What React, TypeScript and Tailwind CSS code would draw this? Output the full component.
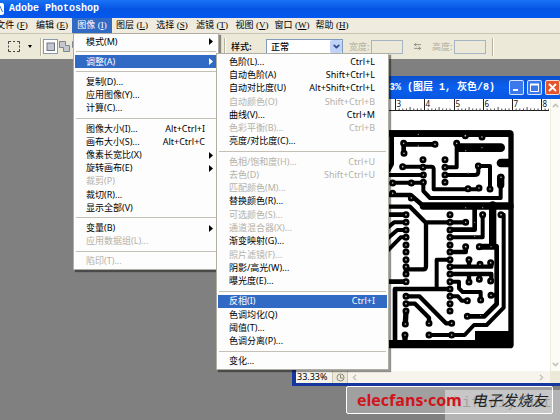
import { ArrowLeftRight, ChevronDown, ChevronLeft, ChevronRight, ChevronUp } from 'lucide-react';
import type { ReactNode } from 'react';

type Item = { label: string; keys?: string; disabled?: boolean; arrow?: boolean; active?: boolean; submenu?: ReactNode };

const menus = [
  ['文件', 'F'],
  ['编辑', 'E'],
  ['图像', 'I'],
  ['图层', 'L'],
  ['选择', 'S'],
  ['滤镜', 'T'],
  ['视图', 'V'],
  ['窗口', 'W'],
  ['帮助', 'H']
];

const adjustGroups: Item[][] = [
  [
    { label: '色阶(L)...', keys: 'Ctrl+L' },
    { label: '自动色阶(A)', keys: 'Shift+Ctrl+L' },
    { label: '自动对比度(U)', keys: 'Alt+Shift+Ctrl+L' },
    { label: '自动颜色(O)', keys: 'Shift+Ctrl+B', disabled: true },
    { label: '曲线(V)...', keys: 'Ctrl+M' },
    { label: '色彩平衡(B)...', keys: 'Ctrl+B', disabled: true },
    { label: '亮度/对比度(C)...' }
  ],
  [
    { label: '色相/饱和度(H)...', keys: 'Ctrl+U', disabled: true },
    { label: '去色(D)', keys: 'Shift+Ctrl+U', disabled: true },
    { label: '匹配颜色(M)...', disabled: true },
    { label: '替换颜色(R)...' },
    { label: '可选颜色(S)...', disabled: true },
    { label: '通道混合器(X)...', disabled: true },
    { label: '渐变映射(G)...' },
    { label: '照片滤镜(F)...', disabled: true },
    { label: '阴影/高光(W)...' },
    { label: '曝光度(E)...' }
  ],
  [
    { label: '反相(I)', keys: 'Ctrl+I', active: true },
    { label: '色调均化(Q)' },
    { label: '阈值(T)...' },
    { label: '色调分离(P)...' }
  ],
  [{ label: '变化...' }]
];

const imageGroups: Item[][] = [
  [{ label: '模式(M)', arrow: true }],
  [
    {
      label: '调整(A)',
      arrow: true,
      active: true,
      submenu: <Menu groups={adjustGroups} className="left-[141px] -top-[2px] h-[317px] w-[173px]" />
    }
  ],
  [{ label: '复制(D)...' }, { label: '应用图像(Y)...' }, { label: '计算(C)...' }],
  [
    { label: '图像大小(I)...', keys: 'Alt+Ctrl+I' },
    { label: '画布大小(S)...', keys: 'Alt+Ctrl+C' },
    { label: '像素长宽比(X)', arrow: true },
    { label: '旋转画布(E)', arrow: true },
    { label: '裁剪(P)', disabled: true },
    { label: '裁切(R)...' },
    { label: '显示全部(V)' }
  ],
  [
    { label: '变量(B)', arrow: true },
    { label: '应用数据组(L)...', disabled: true }
  ],
  [{ label: '陷印(T)...', disabled: true }]
];

function MenuRow({ item }: { item: Item }) {
  const tone = item.active ? 'bg-[#316ac5] text-white' : item.disabled ? 'text-[#b4b1a8]' : 'text-black';
  return (
    <li className="relative flex flex-1">
      <button
        type="button"
        disabled={item.disabled}
        className={`flex flex-1 items-center justify-between pl-[11px] pr-3 text-[9px] leading-3 whitespace-nowrap ${tone}`}
      >
        <span>{item.label}</span>
        {item.keys && <span>{item.keys}</span>}
        {item.arrow && (
          <svg className="-mr-2 h-[7px] w-1" viewBox="0 0 4 7" fill="currentColor">
            <path d="M0 0L4 3.5L0 7Z" />
          </svg>
        )}
      </button>
      {item.submenu}
    </li>
  );
}

function Menu({ groups, className }: { groups: Item[][]; className: string }) {
  return (
    <ul
      className={`absolute z-10 flex flex-col border border-[#b0ada2] bg-[#fdfdfd] p-px font-['Noto_Sans','Noto_Sans_CJK_SC',sans-serif] shadow-[2px_2px_1px_#0000006b] ${className}`}
    >
      {groups.flatMap((group, index) => [
        index > 0 && (
          <li key={`line-${index}`} className="flex h-[7px] flex-none items-center px-px">
            <hr className="flex-1 border-[#c4c1b4]" />
          </li>
        ),
        ...group.map((item) => <MenuRow key={item.label} item={item} />)
      ])}
    </ul>
  );
}

function MenuBar() {
  return (
    <nav className="relative z-20 -ml-2 flex h-[15px] bg-[#efecdf] font-['Liberation_Serif','Noto_Sans_CJK_SC',serif] text-[9px] leading-[15px]">
      {menus.map(([name, key]) => (
        <div key={key} className="relative w-10">
          <button
            type="button"
            className={`h-full w-full text-center whitespace-nowrap ${key === 'I' ? 'bg-[#316ac5] text-white' : 'text-black'}`}
          >
            {name} (<u>{key}</u>)
          </button>
          {key === 'I' && <Menu groups={imageGroups} className="top-full left-px h-[237px] w-[146px]" />}
        </div>
      ))}
    </nav>
  );
}

function Divider() {
  return <div className="h-[18px] w-[2px] border-l border-[#b5b2a2] bg-white" />;
}

function SizeField({ id, label }: { id: string; label: string }) {
  return (
    <div className="flex items-center">
      <label htmlFor={id} className="w-[22px] whitespace-nowrap text-[#b4b1a3]">
        {label}
      </label>
      <input id={id} disabled className="h-[14px] w-8 border border-[#a5b5c6] bg-[#ece9d8]" />
    </div>
  );
}

function OptionsBar() {
  return (
    <div className="flex h-[26px] items-center border-t border-[#c9c5b5] bg-[#ece9d8] font-['Noto_Sans_CJK_SC',sans-serif] text-[9px] leading-3">
      <div className="flex w-[224px] flex-none items-center pl-2">
        <button type="button" aria-label="矩形选框" className="flex items-center gap-2">
          <svg className="h-[11px] w-3" viewBox="0 0 12 11" fill="none" stroke="#444">
            <path d="M.5 3V.5H3M5 .5H7M9 .5H11.500V3M11.500 4.500V6.500M11.500 8V10.500H9M7 10.500H5M3 10.500H.5V8M.5 6.500V4.500" />
          </svg>
          <svg className="h-[3px] w-1" viewBox="0 0 4 3">
            <path d="M0 0H4L2 3Z" />
          </svg>
        </button>
        <div className="mr-px ml-2">
          <Divider />
        </div>
        <button type="button" aria-label="新选区" className="border border-[#8b99ad] bg-white p-[2px]">
          <svg className="size-[9px]" viewBox="0 0 9 9">
            <rect x="1" y="1" width="7.5" height="7.5" fill="#c4c7cf" stroke="#6e7483" />
          </svg>
        </button>
        <button type="button" aria-label="添加到选区" className="ml-px">
          <svg className="size-[11px]" viewBox="0 0 11 11" fill="#c4c7cf" stroke="#80858f">
            <path d="M.5.5H6.500V4.500H10.500V10.500H4.500V6.500H.5Z" />
          </svg>
        </button>
        <button type="button" aria-label="从选区减去" className="ml-[2px]">
          <svg className="size-[11px]" viewBox="0 0 11 11" fill="#c4c7cf" stroke="#80858f">
            <path d="M.5.5H6.500V4.500H4.500V6.500H.5Z" />
          </svg>
        </button>
      </div>
      <Divider />
      <label htmlFor="style" className="mr-[10px] ml-[5px] w-[25px] font-medium whitespace-nowrap">
        样式:
      </label>
      <div className="relative flex">
        <select
          id="style"
          className="h-[15px] w-[77px] appearance-none border border-[#7f9db9] bg-white pl-1 text-[9px] leading-3 font-medium"
        >
          <option>正常</option>
        </select>
        <span className="pointer-events-none absolute top-px right-px flex h-[13px] w-3 items-center justify-center rounded-xs bg-[#c0d2f8] text-[#34508c]">
          <ChevronDown size={9} strokeWidth={5} />
        </span>
      </div>
      <div className="ml-[6px] flex items-center gap-[10px]">
        <SizeField id="width" label="宽度:" />
        <ArrowLeftRight size={9} className="text-[#77756b]" />
        <SizeField id="height" label="高度:" />
      </div>
      <div className="ml-[6px]">
        <Divider />
      </div>
    </div>
  );
}

const traces: [number, string][] = [
  [20, 'M0 191H388'],
  [14, 'M35 195V282L25 300'],
  [14, 'M71 217V250M71 223H165'],
  [12, 'M230 220V292H195'],
  [26, 'M238 233H362'],
  [12, 'M68 290H154Q161 290 161 298V358H297'],
  [12, 'M0 315H130M195 315H284Q295 315 295 305V288H330V357'],
  [26, 'M363 279H386'],
  [22, 'M362 322V345'],
  [12, 'M38 338H130V363L150 384H362V345'],
  [14, 'M20 375H92L130 408'],
  [22, 'M130 408H390'],
  [13, 'M20 410H90L136 457H260M138 457V588Q138 598 130 598H78'],
  [14, 'M20 434H78'],
  [12, 'M20 475L42 457H78M20 508L52 480H78M20 545L62 502H78'],
  [14, 'M284 408V479H210'],
  [12, 'M308 434V502H210'],
  [22, 'M338 405V525'],
  [18, 'M298 530H347'],
  [14, 'M350 530V702L313 739H262'],
  [12, 'M363 434H371V713L320 765H282L254 795H147'],
  [14, 'M210 546H257V532'],
  [12, 'M210 569H170V657'],
  [13, 'M210 590H334V578M267 570V590M300 583V590'],
  [13, 'M210 612H334V632M267 612V635M299 612V627'],
  [14, 'M20 635H78M78 590V612'],
  [14, 'M45 815V657H210'],
  [12, 'M210 635H237V655L248 666H302V690'],
  [12, 'M210 679H234L245 692H262M333 676H350'],
  [13, 'M78 679H118L198 760H215'],
  [13, 'M78 701H105L147 743V762'],
  [16, 'M78 723L76 762M75 795V820']
];

const pads = [
  [71, 220], [165, 223], [72, 250], [129, 269], [195, 269], [195, 292], [68, 290], [129, 292], [195, 315],
  [130, 315], [295, 288], [363, 322], [195, 337], [38, 339], [94, 339], [130, 337], [264, 356], [297, 354],
  [330, 357], [38, 370], [94, 384], [257, 457], [308, 434], [363, 434], [298, 530], [257, 530], [267, 569],
  [300, 583], [332, 578], [267, 636], [298, 628], [332, 633], [302, 690], [262, 692], [333, 676], [262, 739],
  [215, 760], [147, 760], [76, 762], [75, 795], [147, 795], [215, 795], [230, 220], [306, 201], [256, 197]
];

const drills = [
  [115, 228], [115, 193], [257, 242], [306, 233], [265, 309], [257, 413], [308, 413], [284, 457], [284, 499],
  [333, 530], [302, 736]
];

const chipRows = [434, 457, 480, 502, 525, 546, 569, 590, 612, 635, 657, 679, 701, 723];

function Board() {
  const holes = [...pads, ...chipRows.flatMap((y) => (y === 657 ? [[210, y]] : [[78, y], [210, y]]))];
  return (
    <svg className="h-[230px] w-[135px]" viewBox="0 150 405 690" fill="none" stroke="#000">
      <path d="M0 181H390Q401 181 401 192V824Q401 835 390 835H0V810H285V783H385V200H0Z" fill="#000" stroke="none" />
      {traces.map(([width, d]) => (
        <path key={d} d={d} strokeWidth={width} strokeLinecap="round" strokeLinejoin="round" />
      ))}
      {holes.map(([x, y]) => (
        <circle key={`${x}-${y}`} cx={x} cy={y} r="6.500" strokeWidth="8" fill="#bbb" />
      ))}
      {drills.map(([x, y]) => (
        <circle key={`${x}-${y}`} cx={x} cy={y} r="2" fill="#999" stroke="none" />
      ))}
    </svg>
  );
}

function Ruler() {
  const inches = [3, 4, 5, 6, 7, 8];
  return (
    <svg className="h-3 w-[253px]" viewBox="0 0 253 12" stroke="#222">
      <path d="M0 11.500H253" />
      {inches.map((n) => {
        const x = Math.round(11.5 + n * 29.2) + 0.5;
        return (
          <g key={n}>
            <path d={`M${x} 0V12`} strokeWidth="1" />
            {[1, 2, 3, 4, 5, 6, 7].map((t) => (
              <path key={t} d={`M${x + t * 3.65} ${t === 4 ? 8 : 9.5}V12`} strokeWidth="0.8" />
            ))}
            <text x={x + 1} y="8" fontSize="8" fill="#111" stroke="none">
              {n}
            </text>
          </g>
        );
      })}
    </svg>
  );
}

function DocumentWindow() {
  const control = 'flex size-[15px] items-center justify-center rounded-xs border border-white/80';
  return (
    <section className="absolute top-[76px] right-0 left-[292px] flex h-[310px] flex-col border-b-[3px] border-l-4 border-[#15369c] bg-white">
      <header className="-ml-1 flex h-[23px] flex-none items-center gap-[3px] bg-linear-to-b from-[#0b50cc] via-[#0a5ff0] to-[#0756e0] pl-[79px] text-white">
        <h2 className="flex-1 font-['Liberation_Mono','Noto_Sans_CJK_SC',monospace] text-[10px] leading-3 font-bold whitespace-nowrap">
          33.3% (图层 1, 灰色/8)
        </h2>
        <button type="button" aria-label="最小化" className={`${control} bg-[#3b78ea]`}>
          <svg className="size-[9px]" viewBox="0 0 9 9" fill="#fff">
            <rect x="1" y="6" width="5" height="2" />
          </svg>
        </button>
        <button type="button" aria-label="最大化" className={`${control} bg-[#3b78ea]`}>
          <svg className="size-[9px]" viewBox="0 0 9 9" fill="none" stroke="#fff">
            <path d="M.5 1.500H8.500V8.500H.5Z" />
            <path d="M0 1.500H9" strokeWidth="2" />
          </svg>
        </button>
        <button type="button" aria-label="关闭" className={`${control} bg-[#e0562f]`}>
          <svg className="size-[9px]" viewBox="0 0 9 9" stroke="#fff" strokeWidth="1.8">
            <path d="M1 1L8 8M8 1L1 8" />
          </svg>
        </button>
      </header>
      <div className="flex min-h-0 flex-1">
        <div className="flex-1 font-['Noto_Sans',sans-serif]">
          <Ruler />
          <div className="pt-[9px] pl-[84px]">
            <Board />
          </div>
        </div>
        <div className="flex w-[10px] flex-none flex-col items-center justify-between border-l border-[#eeeddf] bg-[#fcfbf6] py-[2px] text-[#c5c3b5]">
          <ChevronUp size={9} strokeWidth={4} />
          <ChevronDown size={9} strokeWidth={4} />
        </div>
      </div>
      <footer className="flex h-3 flex-none items-center bg-[#f6f4ec] font-['Noto_Sans',sans-serif] text-[9px] leading-3 text-black">
        <span className="w-9 pl-px">33.33%</span>
        <span className="flex h-full w-4 items-center justify-center border-x border-[#c9c6b8] bg-[#ece9d8]">
          <svg className="size-[9px]" viewBox="0 0 9 9" fill="none" stroke="#8a887e">
            <circle cx="4.500" cy="4.500" r="3.500" />
            <path d="M4.500 2V5H7" />
          </svg>
        </span>
        <span className="flex flex-1 items-center justify-between pr-1 pl-[2px] text-[#c5c3b5]">
          <ChevronLeft size={9} strokeWidth={4} />
          <ChevronRight size={9} strokeWidth={4} />
        </span>
        <span className="h-full w-[10px] bg-[#ece9d8]" />
      </footer>
    </section>
  );
}

function Watermark() {
  return (
    <>
      <div className="absolute right-0 bottom-0 flex h-[30px] w-[115px] items-start bg-[#b4b4b4] pt-[6px] pl-2 font-['Liberation_Mono',monospace] text-[15px] leading-4 text-[#858585]">
        hifidiy.net
      </div>
      <a
        href="#elecfans"
        className="absolute right-[7px] bottom-[6px] flex h-7 w-[207px] items-center gap-[10px] rounded-xs border border-white bg-white/25 pl-[10px] whitespace-nowrap"
      >
        <span className="font-['Open_Sans',sans-serif] text-[16px] leading-6 font-bold text-[#d0141c]">elecfans·com</span>
        <span className="font-['Noto_Sans_CJK_SC',sans-serif] text-[15px] leading-6 text-[#222] italic">电子发烧友</span>
      </a>
    </>
  );
}

export default function App() {
  return (
    <main className="relative flex min-h-screen flex-col overflow-hidden bg-[#808080]">
      <header className="flex h-[18px] items-center gap-[5px] bg-linear-to-b from-[#1a73f5] via-[#0555e4] to-[#0458ee] text-white">
        <svg className="h-3 w-1" viewBox="0 0 4 12">
          <path d="M0 0H2Q4 0 4 2V10Q4 12 2 12H0Z" fill="#fff" />
          <path d="M0 3L2.500 9" stroke="#3a7bd5" />
        </svg>
        <h1 className="font-['Liberation_Mono',monospace] text-[10px] leading-3 font-bold">Adobe Photoshop</h1>
      </header>
      <MenuBar />
      <OptionsBar />
      <DocumentWindow />
      <Watermark />
    </main>
  );
}
